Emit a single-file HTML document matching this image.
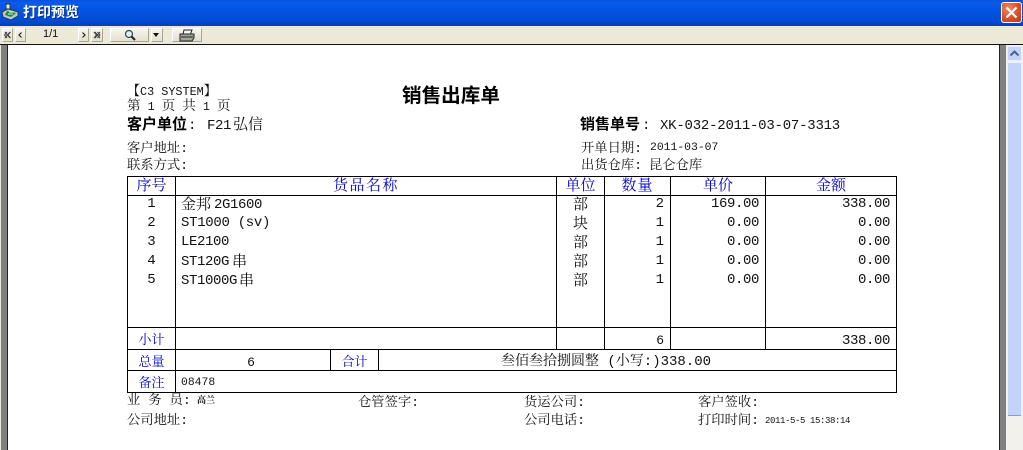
<!DOCTYPE html>
<html lang="zh">
<head>
<meta charset="utf-8">
<title>打印预览</title>
<style>
html,body{margin:0;padding:0;background:#fff}
body{width:1023px;height:450px;overflow:hidden;position:relative}
.a{position:absolute}
.t{position:absolute;white-space:nowrap;line-height:1;color:#111;font-family:"Liberation Mono","Noto Serif CJK SC",serif}
.s{font-family:"Liberation Sans","Noto Sans CJK SC",sans-serif}
.b{color:#0000c8}
.c{text-align:center}
.r{text-align:right}
.n{letter-spacing:-.4px}
.k{font-size:15px;position:relative;top:1px;letter-spacing:0}
.h{position:absolute;background:#000;height:1px}
.v{position:absolute;background:#000;width:1px}
.btn{position:absolute;top:28px;height:12px;background:linear-gradient(#f6f5ee,#e4e0cf);border-right:1px solid #a9a695;border-bottom:1px solid #a9a695;border-top:1px solid #fff;border-left:1px solid #fff}
</style>
</head>
<body>
<!-- title bar -->
<div class="a" style="left:0;top:0;width:1023px;height:26px;background:linear-gradient(#0a53d8 0,#0a5cf0 3px,#0556e6 8px,#0350dc 16px,#0349ce 22px,#0240b8 26px)"></div>
<svg class="a" style="left:1px;top:3px" width="19" height="19" viewBox="0 0 19 19">
<path d="M5 1h4v5H5z" fill="#dfe6ea" stroke="#24343c" stroke-width=".9"/>
<path d="M1 9l6-3 10 3v4l-7 4-8-3z" fill="#b9c6c4" stroke="#24343c" stroke-width=".9"/>
<path d="M6 8l9 2-5 4-6-2z" fill="#1f8a40"/>
<path d="M8 9h5M7 11h5" stroke="#c8f0c8" stroke-width="1"/>
</svg>
<div class="t s" style="left:23px;top:5px;font-size:14px;font-weight:bold;color:#fff;letter-spacing:0;text-shadow:1px 1px 0 #02318f">打印预览</div>
<!-- close -->
<div class="a" style="left:1001px;top:2px;width:19px;height:19px;border:1px solid #fff;border-radius:3px;background:radial-gradient(circle at 35% 30%,#ee8a68,#d94f28 55%,#b93a16)"></div>
<svg class="a" style="left:1001px;top:2px" width="21" height="21" viewBox="0 0 21 21"><path d="M5.500 5.500l10 10M15.500 5.500l-10 10" stroke="#fff" stroke-width="2.200" fill="none"/></svg>
<!-- toolbar -->
<div class="a" style="left:0;top:26px;width:1023px;height:18px;background:#ece9d8"></div>
<div class="a" style="left:0;top:44px;width:1023px;height:1px;background:#111"></div>
<div class="btn" style="left:2px;width:9px"></div>
<svg class="a" style="left:2px;top:28px" width="11" height="14" viewBox="0 0 11 14"><path d="M5 4L2.500 7 5 10M8.500 4L6 7l2.500 3M3 4l5 6M8 4l-5 6" stroke="#444" stroke-width="1" fill="none"/></svg>
<div class="btn" style="left:15px;width:9px"></div>
<svg class="a" style="left:15px;top:28px" width="11" height="14" viewBox="0 0 11 14"><path d="M6.500 4.500L4 7l2.500 2.500" stroke="#222" stroke-width="1.200" fill="none"/></svg>
<div class="t s" style="left:43px;top:29px;font-size:11px;color:#111">1/1</div>
<div class="btn" style="left:78px;width:9px"></div>
<svg class="a" style="left:78px;top:28px" width="11" height="14" viewBox="0 0 11 14"><path d="M4.500 4.500L7 7 4.500 9.500" stroke="#222" stroke-width="1.200" fill="none"/></svg>
<div class="btn" style="left:91px;width:10px"></div>
<svg class="a" style="left:91px;top:28px" width="12" height="14" viewBox="0 0 12 14"><path d="M3 4l2.500 3L3 10M6.500 4L9 7l-2.500 3M4 4l5 6M9 4l-5 6" stroke="#444" stroke-width="1" fill="none"/></svg>
<div class="btn" style="left:110px;width:37px"></div>
<svg class="a" style="left:124px;top:29px" width="12" height="12" viewBox="0 0 12 12"><circle cx="5" cy="5" r="3.500" fill="#dff0f5" stroke="#345" stroke-width="1.200"/><path d="M7.500 7.500L11 11" stroke="#222" stroke-width="2"/></svg>
<div class="btn" style="left:151px;width:10px"></div>
<div class="a" style="left:153px;top:33px;width:0;height:0;border-left:3.500px solid transparent;border-right:3.500px solid transparent;border-top:4px solid #111"></div>
<div class="btn" style="left:172px;width:28px"></div>
<svg class="a" style="left:179px;top:29px" width="16" height="13" viewBox="0 0 16 13"><path d="M5 1h8l-1.500 4H4z" fill="#f4f4f4" stroke="#222" stroke-width="1"/><path d="M1 5h14v4l-2 3H1z" fill="#a5a59d" stroke="#222" stroke-width="1"/><path d="M2 8h12" stroke="#222"/></svg>
<!-- left gutter -->
<div class="a" style="left:0;top:45px;width:1px;height:405px;background:#ece9d8"></div>
<div class="a" style="left:1px;top:45px;width:6px;height:405px;background:#808080"></div>
<div class="a" style="left:7px;top:45px;width:1px;height:405px;background:#222"></div>
<!-- right gutter & scrollbar -->
<div class="a" style="left:999px;top:45px;width:1px;height:405px;background:#222"></div>
<div class="a" style="left:1000px;top:45px;width:6px;height:405px;background:#808080"></div>
<div class="a" style="left:1006px;top:45px;width:17px;height:405px;background:#f3f1ec"></div>
<div class="a" style="left:1007px;top:46px;width:15px;height:15px;background:#c3d3fb;border-radius:2px;box-shadow:inset 0 0 0 1px #e6edff"></div>
<svg class="a" style="left:1007px;top:46px" width="15" height="15" viewBox="0 0 15 15"><path d="M3.500 9.500L7.500 5.500l4 4" stroke="#4d6185" stroke-width="2" fill="none"/></svg>
<div class="a" style="left:1007px;top:62px;width:15px;height:354px;background:#c3d3fb;border-radius:2px;box-sizing:border-box;border:1px solid #eef2fe;border-bottom:1px solid #8a9cc4"></div>

<!-- header text -->
<div class="t" style="left:127px;top:85px;font-size:11.800px"><span style="font-size:13px">【</span>C3 SYSTEM<span style="font-size:13px">】</span></div>
<div class="t" style="left:127px;top:101px;font-size:13.600px">第<span style="font-size:11.700px"> 1 </span>页<span style="font-size:11.700px"> </span>共<span style="font-size:11.700px"> 1 </span>页</div>
<div class="t s" style="left:402px;top:87px;font-size:19.600px;font-weight:bold;color:#000">销售出库单</div>
<div class="t s" style="left:127px;top:117px;font-weight:bold;font-size:15px;color:#000">客户单位</div>
<div class="t" style="left:188px;top:119px;font-size:14px">:</div>
<div class="t n" style="left:207px;top:119px;font-size:14px">F21</div>
<div class="t" style="left:233px;top:118px;font-size:15px">弘信</div>
<div class="t s" style="left:580px;top:117px;font-weight:bold;font-size:15px;color:#000">销售单号</div>
<div class="t" style="left:642px;top:119px;font-size:14px">:</div>
<div class="t" style="left:660px;top:119px;font-size:14px;letter-spacing:-.22px">XK-032-2011-03-07-3313</div>
<div class="t" style="left:127px;top:142px;font-size:13.300px">客户地址:</div>
<div class="t" style="left:127px;top:159px;font-size:13.300px">联系方式:</div>
<div class="t" style="left:581px;top:142px;font-size:13.300px">开单日期:</div>
<div class="t" style="left:650px;top:143px;font-size:11.400px">2011-03-07</div>
<div class="t" style="left:581px;top:159px;font-size:13.300px">出货仓库:</div>
<div class="t" style="left:649px;top:159px;font-size:13.300px">昆仑仓库</div>

<!-- table lines -->
<div class="h" style="left:127px;top:176px;width:770px"></div>
<div class="h" style="left:127px;top:195px;width:770px"></div>
<div class="h" style="left:127px;top:327px;width:770px"></div>
<div class="h" style="left:127px;top:349px;width:770px"></div>
<div class="h" style="left:127px;top:370px;width:770px"></div>
<div class="h" style="left:127px;top:392px;width:770px"></div>
<div class="v" style="left:127px;top:176px;height:217px"></div>
<div class="v" style="left:896px;top:176px;height:217px"></div>
<div class="v" style="left:175px;top:176px;height:217px"></div>
<div class="v" style="left:556px;top:176px;height:174px"></div>
<div class="v" style="left:604px;top:176px;height:174px"></div>
<div class="v" style="left:670px;top:176px;height:174px"></div>
<div class="v" style="left:765px;top:176px;height:174px"></div>
<div class="v" style="left:330px;top:349px;height:22px"></div>
<div class="v" style="left:378px;top:349px;height:22px"></div>

<!-- table head -->
<div class="t b c" style="left:128px;width:47px;top:179px;font-size:15px">序号</div>
<div class="t b c" style="left:176px;width:380px;top:179px;font-size:15px;letter-spacing:1.500px">货品名称</div>
<div class="t b c" style="left:557px;width:47px;top:179px;font-size:15px">单位</div>
<div class="t b c" style="left:605px;width:65px;top:179px;font-size:15px;letter-spacing:1px">数量</div>
<div class="t b c" style="left:671px;width:94px;top:179px;font-size:15px">单价</div>
<div class="t b c" style="left:766px;width:130px;top:179px;font-size:15px">金额</div>

<!-- rows -->
<div class="t c" style="left:128px;width:47px;top:197px;font-size:14px">1</div>
<div class="t c" style="left:128px;width:47px;top:216px;font-size:14px">2</div>
<div class="t c" style="left:128px;width:47px;top:235px;font-size:14px">3</div>
<div class="t c" style="left:128px;width:47px;top:254px;font-size:14px">4</div>
<div class="t c" style="left:128px;width:47px;top:273px;font-size:14px">5</div>

<div class="t n" style="left:181px;top:197px;font-size:14px"><span class="k" style="margin-right:3px">金邦</span>2G1600</div>
<div class="t n" style="left:181px;top:216px;font-size:14px;letter-spacing:-.3px">ST1000 (sv)</div>
<div class="t n" style="left:181px;top:235px;font-size:14px">LE2100</div>
<div class="t n" style="left:181px;top:254px;font-size:14px">ST120G<span class="k" style="margin-left:3px">串</span></div>
<div class="t n" style="left:181px;top:273px;font-size:14px">ST1000G<span class="k" style="margin-left:2px">串</span></div>

<div class="t c" style="left:557px;width:47px;top:198px;font-size:15px">部</div>
<div class="t c" style="left:557px;width:47px;top:217px;font-size:15px">块</div>
<div class="t c" style="left:557px;width:47px;top:236px;font-size:15px">部</div>
<div class="t c" style="left:557px;width:47px;top:255px;font-size:15px">部</div>
<div class="t c" style="left:557px;width:47px;top:274px;font-size:15px">部</div>

<div class="t r" style="left:605px;width:59px;top:197px;font-size:14px">2</div>
<div class="t r" style="left:605px;width:59px;top:216px;font-size:14px">1</div>
<div class="t r" style="left:605px;width:59px;top:235px;font-size:14px">1</div>
<div class="t r" style="left:605px;width:59px;top:254px;font-size:14px">1</div>
<div class="t r" style="left:605px;width:59px;top:273px;font-size:14px">1</div>

<div class="t r n" style="left:671px;width:88px;top:197px;font-size:14px">169.00</div>
<div class="t r n" style="left:671px;width:88px;top:216px;font-size:14px">0.00</div>
<div class="t r n" style="left:671px;width:88px;top:235px;font-size:14px">0.00</div>
<div class="t r n" style="left:671px;width:88px;top:254px;font-size:14px">0.00</div>
<div class="t r n" style="left:671px;width:88px;top:273px;font-size:14px">0.00</div>

<div class="t r n" style="left:766px;width:124px;top:197px;font-size:14px">338.00</div>
<div class="t r n" style="left:766px;width:124px;top:216px;font-size:14px">0.00</div>
<div class="t r n" style="left:766px;width:124px;top:235px;font-size:14px">0.00</div>
<div class="t r n" style="left:766px;width:124px;top:254px;font-size:14px">0.00</div>
<div class="t r n" style="left:766px;width:124px;top:273px;font-size:14px">0.00</div>

<!-- subtotal -->
<div class="t b c" style="left:128px;width:47px;top:334px;font-size:13px">小计</div>
<div class="t r" style="left:605px;width:59px;top:334px;font-size:13px">6</div>
<div class="t r n" style="left:766px;width:124px;top:334px;font-size:14px">338.00</div>
<div class="t b c" style="left:128px;width:47px;top:356px;font-size:13px">总量</div>
<div class="t c" style="left:174px;width:154px;top:356px;font-size:13px">6</div>
<div class="t b c" style="left:331px;width:47px;top:356px;font-size:13px">合计</div>
<div class="t" style="left:501px;top:355px;font-size:14px">叁佰叁拾捌圆整 (小写:)338.00</div>
<div class="t b c" style="left:128px;width:47px;top:377px;font-size:13px">备注</div>
<div class="t" style="left:181px;top:378px;font-size:11.400px">08478</div>

<!-- footer -->
<div class="t" style="left:127px;top:394px;font-size:13.300px">业 务 员:</div>
<div class="t" style="left:197px;top:397px;font-size:9px;font-weight:bold">高兰</div>
<div class="t" style="left:127px;top:414px;font-size:13.300px">公司地址:</div>
<div class="t" style="left:358px;top:396px;font-size:13.300px">仓管签字:</div>
<div class="t" style="left:524px;top:396px;font-size:13.300px">货运公司:</div>
<div class="t" style="left:524px;top:414px;font-size:13.300px">公司电话:</div>
<div class="t" style="left:698px;top:396px;font-size:13.300px">客户签收:</div>
<div class="t" style="left:698px;top:414px;font-size:13.300px">打印时间:</div>
<div class="t" style="left:765px;top:417px;font-size:9px;letter-spacing:-.4px">2011-5-5 15:38:14</div>
</body>
</html>
